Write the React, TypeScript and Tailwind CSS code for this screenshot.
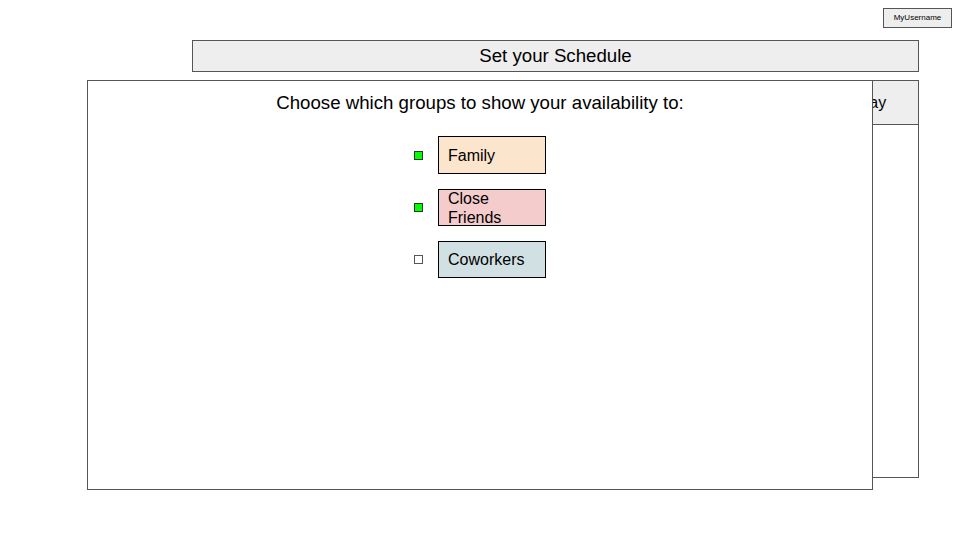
const groups = [
  { label: 'Family', checked: true, bg: 'bg-[#fce5cd]', h: 'h-[38px]' },
  { label: 'Close Friends', checked: true, bg: 'bg-[#f4cccc]', h: 'h-[37px]' },
  { label: 'Coworkers', checked: false, bg: 'bg-[#d0e0e3]', h: 'h-[37px]' },
];

export default function App() {
  return (
    <div className="relative h-[540px] w-[960px] overflow-hidden bg-white font-['Liberation_Sans',Arial,sans-serif] text-black">
      {/* top bar */}
      <div className="flex justify-end pr-[8px] pt-[8px]">
        <button className="h-[20px] w-[69px] border border-[#555] bg-[#eeeeee] text-[8px] leading-none text-black">
          MyUsername
        </button>
      </div>

      <div className="ml-[192px] mt-[12px] flex h-[32px] w-[727px] items-center justify-center border border-[#555] bg-[#eeeeee] text-[18.67px]">
        Set your Schedule
      </div>

      {/* schedule table, mostly hidden behind the dialog */}
      <div className="ml-[192px] mt-[8px] flex h-[398px] w-[727px] flex-col border border-[#555]">
        <div className="flex h-[44px] justify-end border-b border-[#555] bg-[#eeeeee]">
          <div className="flex w-[118px] items-center justify-center text-[16px]">Sunday</div>
        </div>
        <div className="flex-1" />
      </div>

      {/* dialog */}
      <div className="absolute left-[87px] top-[80px] flex h-[410px] w-[786px] flex-col items-center border border-[#555] bg-white pt-[11px]">
        <p className="text-[18.67px] leading-[22px]">Choose which groups to show your availability to:</p>
        <div className="mt-[22px] flex flex-col gap-[15px]">
          {groups.map((g) => (
            <div key={g.label} className="flex items-center gap-[15px]">
              <span
                className={`block h-[9px] w-[9px] border ${
                  g.checked ? 'border-[#333] bg-[#00ff00]' : 'border-[#555] bg-white'
                }`}
              />
              <div
                className={`flex w-[108px] items-center border border-black pl-[9px] text-[16px] leading-[19px] ${g.h} ${g.bg}`}
              >
                {g.label}
              </div>
            </div>
          ))}
        </div>
      </div>
    </div>
  );
}
